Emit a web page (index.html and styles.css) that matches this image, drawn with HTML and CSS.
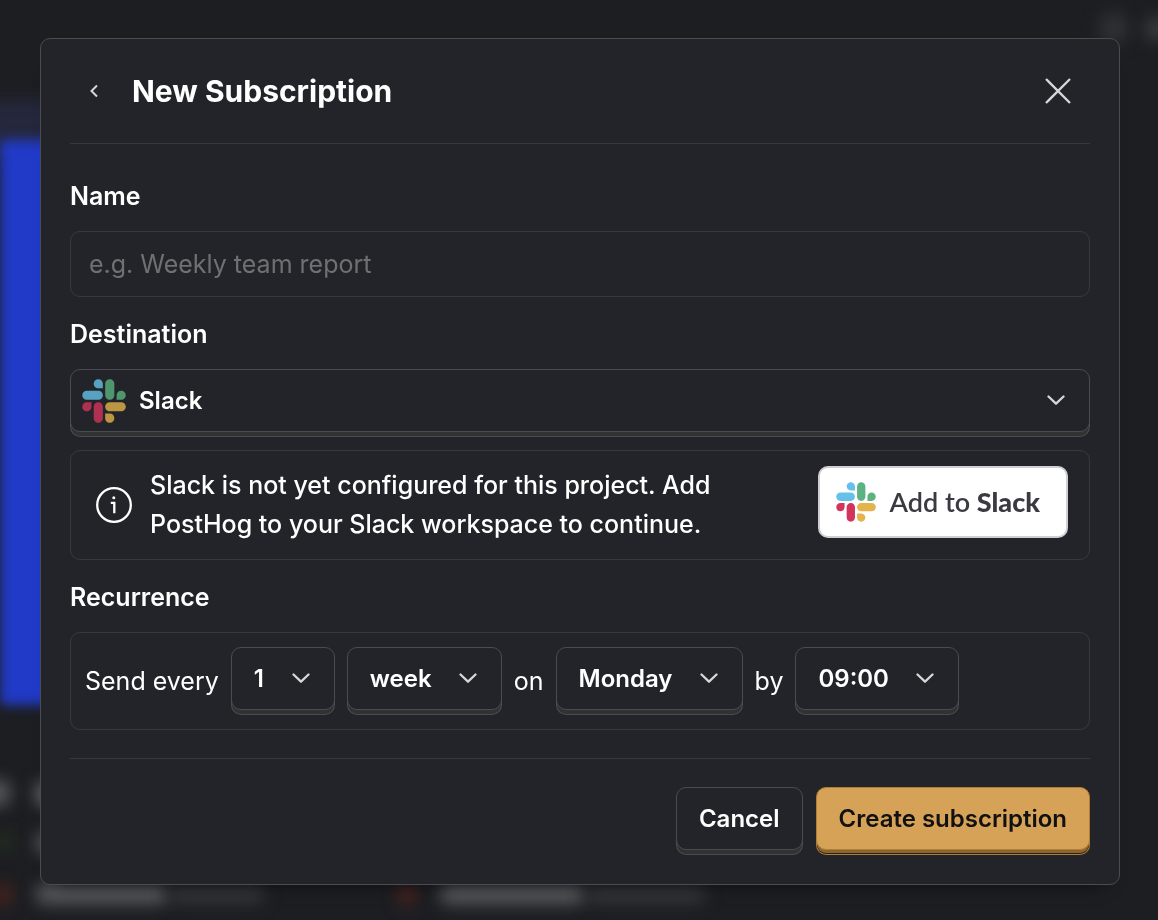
FILE: index.html
```html
<!DOCTYPE html>
<html lang="en">
<head>
<meta charset="utf-8">
<meta name="viewport" content="width=device-width, initial-scale=1">
<title>New Subscription</title>
<link rel="stylesheet" href="styles.css">
</head>
<body>
<svg class="sprite" aria-hidden="true">
  <symbol id="chevron" viewBox="0 0 18 11"><path d="M1.500 1.500 9 8.700l7.500-7.200" fill="none" stroke="currentColor" stroke-width="2.300" stroke-linecap="round" stroke-linejoin="round"/></symbol>
  <symbol id="slack" viewBox="0 0 127 127">
    <path fill="#d2345b" d="M27.2 80c0 7.300-5.900 13.200-13.200 13.200S.8 87.300.8 80s5.900-13.200 13.200-13.200h13.200V80zm6.600 0c0-7.300 5.900-13.200 13.200-13.200S60.200 72.700 60.200 80v33c0 7.300-5.900 13.200-13.200 13.200s-13.200-5.900-13.200-13.200V80z"/>
    <path fill="#65c1ea" d="M47 27c-7.300 0-13.200-5.900-13.200-13.200S39.700.6 47 .6s13.200 5.900 13.200 13.200V27H47zm0 6.700c7.300 0 13.200 5.900 13.200 13.200S54.300 60.100 47 60.100H13.900C6.600 60.100.7 54.200.7 46.900s5.900-13.200 13.200-13.200H47z"/>
    <path fill="#5bb381" d="M99.900 46.900c0-7.300 5.900-13.200 13.200-13.200s13.200 5.900 13.200 13.200-5.900 13.200-13.200 13.200H99.900V46.900zm-6.600 0c0 7.300-5.900 13.200-13.200 13.200s-13.200-5.900-13.200-13.200V13.800C66.900 6.500 72.800.6 80.100.6s13.200 5.900 13.200 13.200v33.100z"/>
    <path fill="#e4b34b" d="M80.100 99.800c7.300 0 13.200 5.900 13.200 13.200s-5.900 13.200-13.200 13.200-13.200-5.900-13.200-13.200V99.800h13.200zm0-6.600c-7.300 0-13.200-5.900-13.200-13.200s5.900-13.200 13.200-13.200h33.100c7.300 0 13.200 5.900 13.200 13.200s-5.900 13.200-13.200 13.200H80.100z"/>
  </symbol>
</svg>

<div class="backdrop" aria-hidden="true">
  <span class="blob blob-halo"></span>
  <span class="blob blob-bar"></span>
  <span class="blob blob-tool"></span>
  <span class="blob blob-tool-text"></span>
  <span class="blob blob-index"></span>
  <span class="blob blob-title"></span>
  <span class="blob blob-up"></span>
  <span class="blob blob-up-text"></span>
  <span class="blob blob-down"></span>
  <span class="blob blob-count"></span>
  <span class="blob blob-percent"></span>
  <span class="blob blob-down blob-second"></span>
  <span class="blob blob-count blob-count-second"></span>
  <span class="blob blob-percent blob-percent-second"></span>
</div>

<form class="modal" role="dialog" aria-labelledby="title">
  <header class="modal-header">
    <button class="icon-button back" type="button" aria-label="Back">
      <svg width="10" height="14" viewBox="0 0 10 14"><path d="M8 1.500 2.500 7 8 12.500" fill="none" stroke="currentColor" stroke-width="2"/></svg>
    </button>
    <h1 class="title" id="title">New Subscription</h1>
    <button class="icon-button close" type="button" aria-label="Close">
      <svg width="28" height="28" viewBox="0 0 28 28"><path d="m2 2 24 24M26 2 2 26" fill="none" stroke="currentColor" stroke-width="2.300"/></svg>
    </button>
  </header>

  <div class="modal-body">
    <label class="label" for="name">Name</label>
    <input class="text-input" id="name" type="text" placeholder="e.g. Weekly team report">

    <label class="label" for="destination">Destination</label>
    <div class="select select-wide">
      <svg class="select-logo" width="44" height="44"><use href="#slack"/></svg>
      <select class="select-field raised" id="destination"><option>Slack</option></select>
      <svg class="chevron" width="18" height="11"><use href="#chevron"/></svg>
    </div>

    <div class="panel banner">
      <svg class="info" width="38" height="38" viewBox="0 0 38 38" fill="none" stroke="currentColor" stroke-width="2.300"><circle cx="19" cy="19" r="16.800"/><path d="M15.800 16.800h3.500v10.500"/><circle cx="18.800" cy="11.700" r="1.500" fill="currentColor" stroke="none"/></svg>
      <p class="banner-text">Slack is not yet configured for this project. Add PostHog to your Slack workspace to continue.</p>
      <a class="add-slack" href="#"><svg width="40" height="40"><use href="#slack"/></svg><span>Add to <b>Slack</b></span></a>
    </div>

    <span class="label" id="recurrence">Recurrence</span>
    <div class="panel recurrence" role="group" aria-labelledby="recurrence">
      <span>Send every</span>
      <div class="select"><select class="select-field raised" aria-label="Interval"><option>1</option></select><svg class="chevron" width="18" height="11"><use href="#chevron"/></svg></div>
      <div class="select"><select class="select-field raised" aria-label="Frequency"><option>week</option></select><svg class="chevron" width="18" height="11"><use href="#chevron"/></svg></div>
      <span>on</span>
      <div class="select"><select class="select-field raised" aria-label="Day"><option>Monday</option></select><svg class="chevron" width="18" height="11"><use href="#chevron"/></svg></div>
      <span>by</span>
      <div class="select"><select class="select-field raised" aria-label="Time"><option>09:00</option></select><svg class="chevron" width="18" height="11"><use href="#chevron"/></svg></div>
    </div>
  </div>

  <footer class="modal-footer">
    <button class="button raised" type="button">Cancel</button>
    <button class="button raised primary" type="submit">Create subscription</button>
  </footer>
</form>
</body>
</html>
```
FILE: styles.css
```css
* {
  box-sizing: border-box;
}

body {
  margin: 0;
  min-height: 100vh;
  background: #1d1e22;
  color: #fff;
  font: 500 25px/39px Inter, "Liberation Sans", sans-serif;
  overflow: hidden;
}

button,
input,
select {
  font: inherit;
  color: inherit;
}

svg {
  display: block;
  flex: none;
}

.sprite {
  position: absolute;
  width: 0;
  height: 0;
}

/* Blurred page behind the dialog */
.backdrop {
  position: fixed;
  inset: 0;
  overflow: hidden;
}

.blob {
  position: absolute;
  border-radius: 8px;
  filter: blur(8px);
}

.blob-halo { left: -20px; top: 100px; width: 100px; height: 60px; background: #25283c; }
.blob-bar { left: 0; top: 140px; width: 120px; height: 565px; background: #213ac7; border-radius: 0; filter: blur(6px); }
.blob-tool { left: 1100px; top: 14px; width: 28px; height: 28px; background: #303135; }
.blob-tool-text { left: 1144px; top: 18px; width: 40px; height: 22px; background: #38393c; }
.blob-index { left: -20px; top: 780px; width: 30px; height: 26px; background: #55565a; }
.blob-title { left: 36px; top: 782px; width: 60px; height: 24px; background: #68696c; }
.blob-up { left: -4px; top: 834px; width: 16px; height: 16px; background: #24361e; }
.blob-up-text { left: 36px; top: 832px; width: 60px; height: 22px; background: #55565a; }
.blob-down { left: -6px; top: 884px; width: 18px; height: 22px; background: #4a231e; }
.blob-count { left: 36px; top: 884px; width: 132px; height: 20px; background: #58595c; }
.blob-percent { left: 168px; top: 884px; width: 96px; height: 20px; background: #333438; }
.blob-second { left: 398px; }
.blob-count-second { left: 440px; width: 145px; }
.blob-percent-second { left: 585px; width: 120px; }

/* Dialog */
.modal {
  position: relative;
  display: flex;
  flex-direction: column;
  margin: 38px 38px 35px 40px;
  padding: 0 29px 34px;
  background: #232429;
  border: 1px solid #4b4c50;
  border-radius: 10px;
  box-shadow: 0 16px 16px -16px #0008;
}

.modal-header {
  display: flex;
  align-items: center;
  height: 105px;
  border-bottom: 1px solid #38393e;
}

.title {
  flex: 1;
  margin: 0;
  font-size: 30px;
  font-weight: 700;
}

.icon-button {
  display: grid;
  place-items: center;
  padding: 0;
  border: 0;
  background: none;
  color: #d7d7d8;
}

.back {
  width: 48px;
  height: 48px;
  margin-right: 14px;
}

.close {
  width: 64px;
  height: 48px;
}

.modal-body {
  display: flex;
  flex-direction: column;
  padding: 32px 0 28px;
}

.label {
  margin-bottom: 15px;
  font-weight: 600;
  line-height: 40px;
}

.text-input {
  height: 66px;
  margin-bottom: 17px;
  padding: 0 18px;
  background: transparent;
  border: 1px solid #38393e;
  border-radius: 10px;
  font-weight: 400;
}

.text-input::placeholder {
  color: #6f7073;
  opacity: 1;
}

.raised {
  height: 63px;
  background: #232429;
  border: 1px solid #4b4c50;
  border-radius: 10px;
  box-shadow: 0 5px 0 -1px #323232, 0 5px 0 0 #4b4c50;
  font-size: 24px;
  font-weight: 600;
}

/* The field and its arrow share one grid cell */
.select {
  display: grid;
  align-items: center;
}

.select > * {
  grid-area: 1 / 1;
}

.select-field {
  appearance: none;
  width: 100%;
  padding: 0 69px 0 22px;
}

.chevron {
  justify-self: end;
  margin-right: 25px;
  color: #d7d7d8;
  pointer-events: none;
  z-index: 1;
}

.select-wide {
  margin-bottom: 18px;
}

.select-wide .select-field {
  padding-left: 68px;
}

.select-logo {
  z-index: 1;
  margin-left: 12px;
  opacity: 0.8;
  pointer-events: none;
}

.panel {
  display: flex;
  align-items: center;
  border: 1px solid #38393e;
  border-radius: 10px;
}

.banner {
  gap: 17px;
  margin-bottom: 17px;
  padding: 15px 21px 15px 24px;
}

.banner-text {
  flex: 1;
  max-width: 600px;
  margin: 0;
}

.add-slack {
  display: flex;
  align-items: center;
  align-self: flex-start;
  gap: 13px;
  height: 72px;
  margin-left: auto;
  padding: 0 26px 0 16px;
  background: #fff;
  border: 2px solid #cfcfd1;
  border-radius: 10px;
  color: #3a3a40;
  font: 600 27px/40px Lato, sans-serif;
  text-decoration: none;
  white-space: nowrap;
}

.recurrence {
  gap: 12px;
  padding: 14px;
  font-weight: 400;
}

/* Room for the raised edge below each field */
.recurrence .select {
  margin-bottom: 5px;
}

.modal-footer {
  display: flex;
  justify-content: flex-end;
  gap: 13px;
  padding-top: 28px;
  border-top: 1px solid #38393e;
}

.button {
  padding: 0 22px;
}

.primary {
  background: #d6a258;
  border-color: #b17d32;
  box-shadow: 0 4px 0 -1px #8e662c, 0 5px 0 -1px #232429, 0 5px 0 0 #b17d32;
  color: #111;
}
```
